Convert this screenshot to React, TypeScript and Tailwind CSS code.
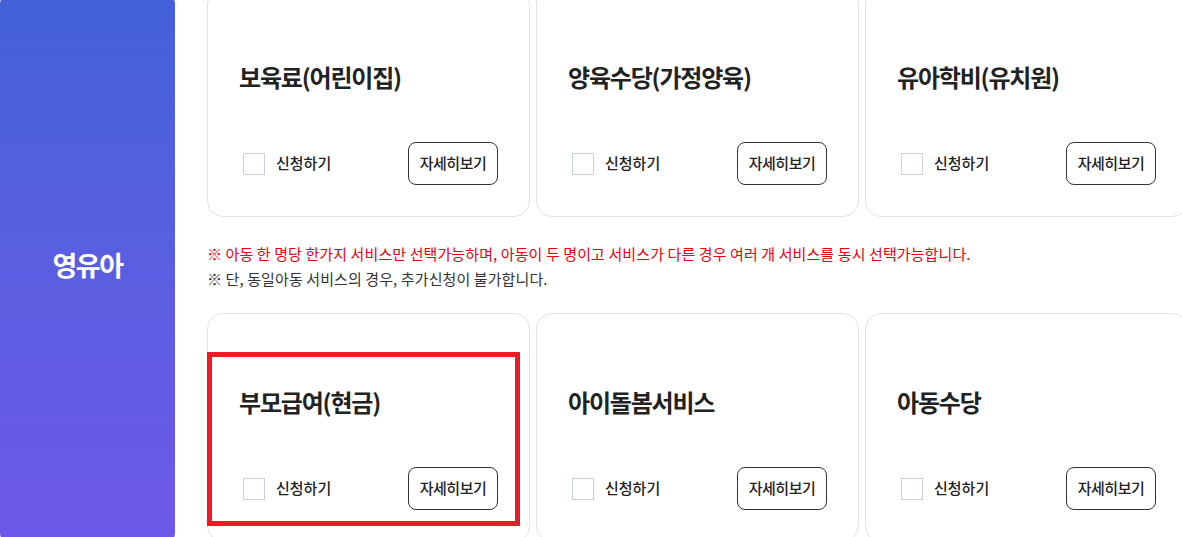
import React from "react";

const font = { fontFamily: '"Noto Sans CJK KR", "Noto Sans", sans-serif' };

function Card({ title, highlight }: { title: string; highlight?: boolean }) {
  return (
    <div className="relative flex h-[229px] w-[323px] shrink-0 flex-col rounded-[16px] border border-[#e3e3e3] bg-white px-[31px] pt-[72px]">
      <h3 className="text-[24px] font-bold leading-[32px] tracking-[-1.2px] text-[#222]">{title}</h3>
      <div className="mt-[49px] flex items-center justify-between">
        <label className="ml-[4px] flex items-center gap-[11px]">
          <span className="block h-[22px] w-[22px] border border-[#c8d1e1] bg-white" />
          <span className="text-[15px] font-medium text-[#222]">신청하기</span>
        </label>
        <button className="flex h-[43px] w-[90px] items-center justify-center rounded-[8px] border border-[#333] bg-white text-[15px] font-medium tracking-[-0.5px] text-[#222]">
          자세히보기
        </button>
      </div>
      {highlight && (
        <div className="pointer-events-none absolute left-[-1px] top-[38px] h-[174px] w-[313px] border-[5px] border-[#ed1c24]" />
      )}
    </div>
  );
}

export default function App() {
  return (
    <div className="flex h-[537px] w-[1182px] overflow-hidden bg-white" style={font}>
      <aside className="mt-[-6px] flex h-[549px] w-[175px] shrink-0 items-center justify-center rounded-[10px] bg-gradient-to-b from-[#4262d9] to-[#6e59e9]">
        <span className="mb-[6px] text-[27px] font-bold tracking-[-1.5px] text-white">영유아</span>
      </aside>
      <main className="ml-[32px] mt-[-12px] flex flex-col">
        <div className="flex gap-[6px]">
          <Card title="보육료(어린이집)" />
          <Card title="양육수당(가정양육)" />
          <Card title="유아학비(유치원)" />
        </div>
        <div className="mt-[24px] mb-[22px] text-[15px] leading-[25px] tracking-[0.1px]">
          <p className="text-[#e60012]">※ 아동 한 명당 한가지 서비스만 선택가능하며, 아동이 두 명이고 서비스가 다른 경우 여러 개 서비스를 동시 선택가능합니다.</p>
          <p className="text-[#333]">※ 단, 동일아동 서비스의 경우, 추가신청이 불가합니다.</p>
        </div>
        <div className="flex gap-[6px]">
          <Card title="부모급여(현금)" highlight />
          <Card title="아이돌봄서비스" />
          <Card title="아동수당" />
        </div>
      </main>
    </div>
  );
}
